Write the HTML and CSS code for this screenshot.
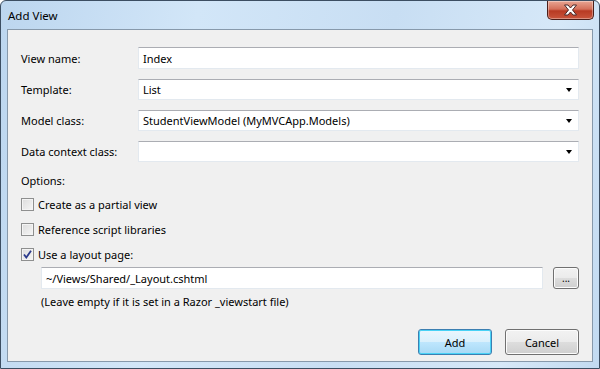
FILE: index.html
```html
<!DOCTYPE html>
<html lang="en">
<head>
  <meta charset="UTF-8">
  <title>Add View</title>
  <link rel="stylesheet" href="styles.css">
</head>
<body>
  <div class="window">
    <div class="titlebar">
      <span class="title">Add View</span>
      <button class="close" aria-label="Close">
        <svg width="17" height="12" viewBox="0 0 17 12">
          <path d="M2.5 1h3.5l2.5 3 2.5-3h3.5l-4 5 4 5h-3.5l-2.5-3-2.5 3h-3.5l4-5z" fill="#fff" stroke="#4a2a2a" stroke-width="1" stroke-linejoin="round"/>
        </svg>
      </button>
    </div>

    <div class="client">
      <div class="row first">
        <label class="field-label">View name:</label>
        <div class="box">Index</div>
      </div>
      <div class="row">
        <label class="field-label">Template:</label>
        <div class="box combo">List<span class="arrow"></span></div>
      </div>
      <div class="row">
        <label class="field-label">Model class:</label>
        <div class="box combo">StudentViewModel (MyMVCApp.Models)<span class="arrow"></span></div>
      </div>
      <div class="row">
        <label class="field-label">Data context class:</label>
        <div class="box combo"><span class="arrow"></span></div>
      </div>

      <div class="options-title">Options:</div>
      <div class="check"><span class="cb"></span>Create as a partial view</div>
      <div class="check"><span class="cb"></span>Reference script libraries</div>
      <div class="check"><span class="cb checked">
        <svg width="9" height="9" viewBox="0 0 9 9"><path d="M1 4.5l2.3 3L8 0.8" fill="none" stroke="#2b3a8c" stroke-width="1.8"/></svg>
      </span>Use a layout page:</div>

      <div class="layout-row">
        <div class="box path">~/Views/Shared/_Layout.cshtml</div>
        <button class="btn small">...</button>
      </div>
      <div class="note">(Leave empty if it is set in a Razor _viewstart file)</div>

      <div class="actions">
        <button class="btn default">Add</button>
        <button class="btn">Cancel</button>
      </div>
    </div>
  </div>
</body>
</html>
```

FILE: styles.css
```css
html, body {
  margin: 0;
  padding: 0;
}
body {
  font-family: "Segoe UI", "Noto Sans", sans-serif;
  font-size: 11px;
  color: #000;
  background: #fff;
}
.window {
  width: 600px;
  height: 369px;
  box-sizing: border-box;
  border: 1px solid #3c4e62;
  border-radius: 6px 6px 0 0;
  background: linear-gradient(100deg, #bcd6ef 0%, #d2e6f8 30%, #c8def3 60%, #d6e8f8 85%, #c2daf1 100%);
  padding: 0 6px 6px 6px;
  display: flex;
  flex-direction: column;
}
.titlebar {
  height: 28px;
  display: flex;
  align-items: flex-start;
  justify-content: space-between;
}
.title {
  padding: 7px 0 0 1px;
  font-size: 11.5px;
  color: #000;
}
.close {
  width: 47px;
  height: 19px;
  margin-right: -1px;
  border: 1px solid #4b1f1a;
  border-top: none;
  border-radius: 0 0 5px 5px;
  background: linear-gradient(#e8a593 0%, #d4705a 45%, #b83a23 55%, #c9553c 100%);
  box-shadow: inset 0 0 0 1px rgba(255,255,255,0.35);
  padding: 0;
  display: flex;
  align-items: center;
  justify-content: center;
}
.client {
  flex: 1;
  background: #f0f0f0;
  border: 1px solid #8799ab;
  padding: 17px 13px 0 13px;
  display: flex;
  flex-direction: column;
}
.row {
  display: flex;
  align-items: center;
  margin-top: 10px;
}
.row.first {
  margin-top: 0;
}
.field-label {
  width: 117px;
  flex: none;
}
.box {
  flex: 1;
  height: 21px;
  box-sizing: border-box;
  background: #fff;
  border: 1px solid #e3e9ef;
  border-top-color: #abadb3;
  padding: 0 4px;
  display: flex;
  align-items: center;
  position: relative;
}
.row.first .box {
  height: 22px;
}
.arrow {
  position: absolute;
  right: 6px;
  top: 8px;
  border-left: 3.5px solid transparent;
  border-right: 3.5px solid transparent;
  border-top: 4px solid #000;
}
.options-title {
  margin-top: 11px;
}
.check {
  display: flex;
  align-items: center;
  margin-top: 8px;
  height: 17px;
}
.cb {
  width: 13px;
  height: 13px;
  box-sizing: border-box;
  border: 1px solid #8e8f8f;
  background: linear-gradient(135deg, #dcdcdc, #f6f6f6);
  box-shadow: inset 0 0 0 1px #f4f4f4;
  margin-right: 4px;
  display: flex;
  align-items: center;
  justify-content: center;
}
.layout-row {
  display: flex;
  align-items: center;
  margin: 4px 0 0 20px;
}
.box.path {
  height: 22px;
  flex: 1;
}
.btn {
  font-family: inherit;
  font-size: 11px;
  color: #000;
  border: 1px solid #707070;
  border-radius: 3px;
  background: linear-gradient(#f2f2f2 0%, #ebebeb 50%, #dddddd 51%, #cfcfcf 100%);
  box-shadow: inset 0 0 0 1px #fcfcfc;
  padding: 0;
}
.btn.small {
  width: 26px;
  height: 22px;
  margin-left: 10px;
  font-size: 10px;
}
.note {
  margin: 5px 0 0 20px;
}
.actions {
  display: flex;
  justify-content: flex-end;
  gap: 13px;
  margin-top: 20px;
}
.actions .btn {
  width: 74px;
  height: 26px;
}
.btn.default {
  border-color: #3c7fb1;
  background: linear-gradient(#eaf6fd 0%, #d9f0fc 50%, #bee6fd 51%, #a7d9f5 100%);
  box-shadow: inset 0 0 0 1px #48d2f6;
}
```
